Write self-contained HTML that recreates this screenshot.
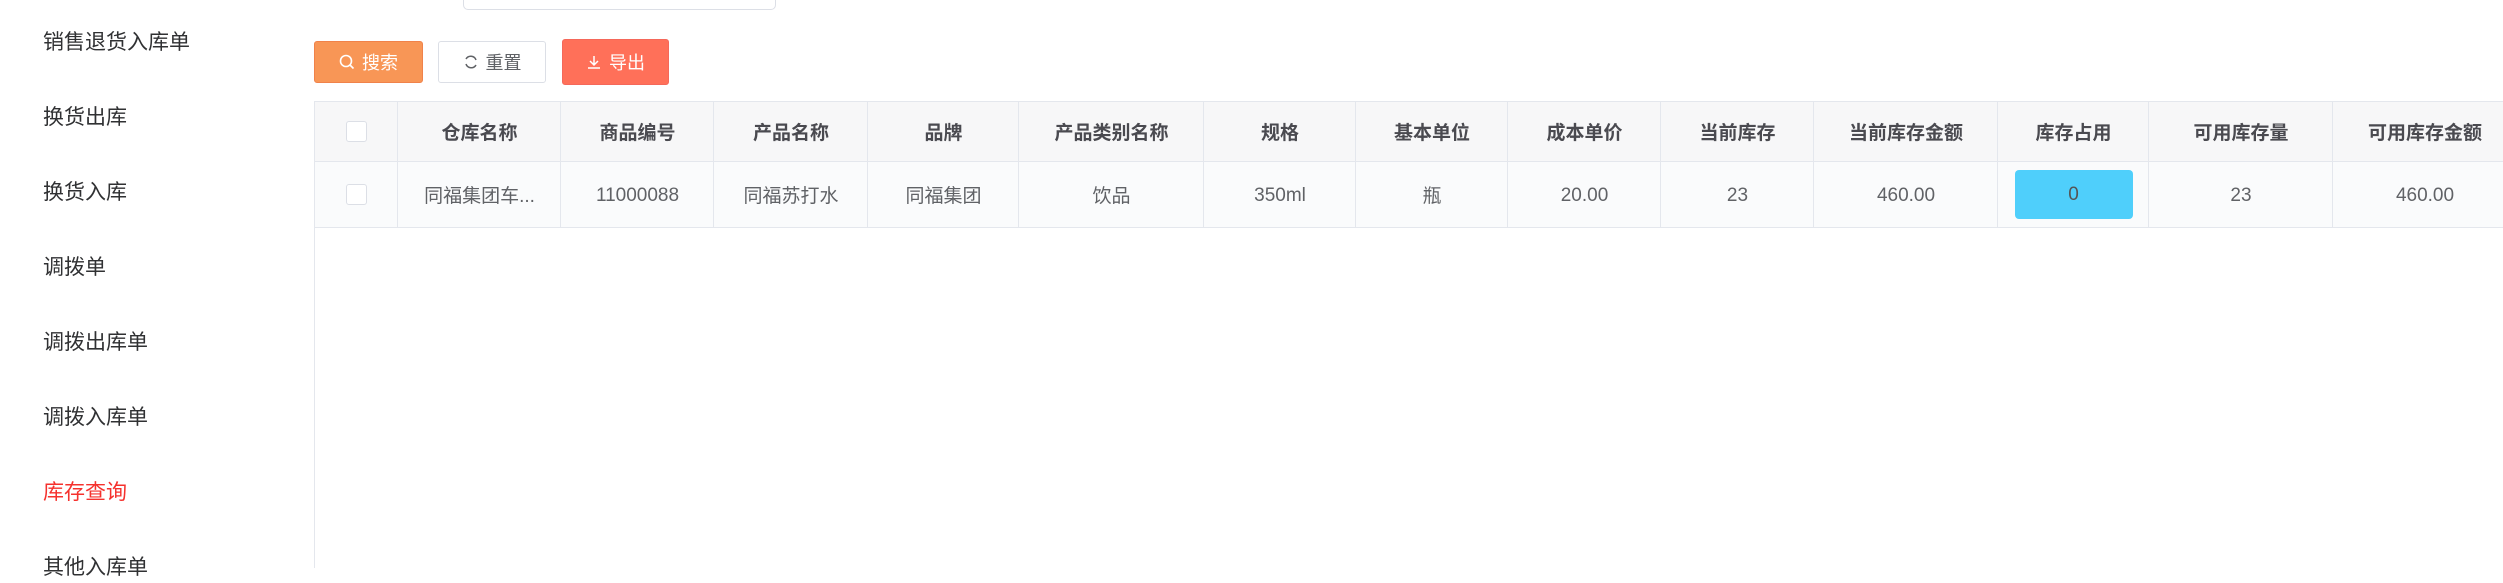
<!DOCTYPE html>
<html><head><meta charset="utf-8"><style>
*{margin:0;padding:0;box-sizing:border-box}
body{width:2503px;height:565px;background:#fff;font-family:"Liberation Sans","Noto Sans CJK SC",sans-serif;position:relative;overflow:hidden;color:#303133}
.menu{position:absolute;left:43px;font-size:21px;color:#303133;line-height:30px}
.inp{position:absolute;left:463px;top:-10px;width:313px;height:20px;border:1px solid #dcdfe6;border-radius:5px}
.btn{position:absolute;font-size:18px;display:flex;align-items:center;justify-content:center;border-radius:3px;gap:7px}
.hd{position:absolute;top:101px;height:61px;background:#f7f7f8;border:1px solid #e4e7ed;border-right:none;display:flex;align-items:center;justify-content:center;font-size:19px;font-weight:bold;color:#4a4a50;white-space:nowrap}
.cl{position:absolute;top:161px;height:67px;background:#fafbfc;border:1px solid #e4e7ed;border-right:none;display:flex;align-items:center;justify-content:center;font-size:19px;color:#606266;white-space:nowrap;overflow:hidden}
.n{padding-top:3px}
.cb{display:inline-block;width:21px;height:21px;border:1px solid #dcdfe6;border-radius:3px;background:#fff}
.vl{position:absolute;left:314px;top:228px;width:1px;height:340px;background:#e4e7ed}
</style></head><body>
<div class="menu" style="top:28px">销售退货入库单</div>
<div class="menu" style="top:103px">换货出库</div>
<div class="menu" style="top:178px">换货入库</div>
<div class="menu" style="top:253px">调拨单</div>
<div class="menu" style="top:328px">调拨出库单</div>
<div class="menu" style="top:403px">调拨入库单</div>
<div class="menu" style="top:478px;color:#f5312d">库存查询</div>
<div class="menu" style="top:553px">其他入库单</div>
<div class="inp"></div>
<div class="btn" style="left:314px;top:41px;width:109px;height:42px;background:#f89656;border:1px solid #f0824a;color:#fff">
<svg width="16" height="16" viewBox="0 0 16 16"><circle cx="7" cy="7" r="5.5" fill="none" stroke="#fff" stroke-width="1.6"/><path d="M11 11l3.5 3.5" stroke="#fff" stroke-width="1.6"/></svg>搜索</div>
<div class="btn" style="left:438px;top:41px;width:108px;height:42px;background:#fff;border:1px solid #dcdfe6;color:#606266">
<svg width="16" height="16" viewBox="0 0 16 16"><path d="M13 6A5.5 5.5 0 0 0 3 5M3 10a5.5 5.5 0 0 0 10 1" fill="none" stroke="#606266" stroke-width="1.5"/></svg>重置</div>
<div class="btn" style="left:562px;top:39px;width:107px;height:46px;background:#ff7059;border:1px solid #f5685a;color:#fff">
<svg width="16" height="16" viewBox="0 0 16 16"><path d="M8 2v9M4 7l4 4 4-4M2 14h12" fill="none" stroke="#fff" stroke-width="1.5"/></svg>导出</div>

<div class="hd" style="left:314px;width:84px"><span class="cb"></span></div>
<div class="hd" style="left:397px;width:164px">仓库名称</div>
<div class="hd" style="left:560px;width:154px">商品编号</div>
<div class="hd" style="left:713px;width:155px">产品名称</div>
<div class="hd" style="left:867px;width:152px">品牌</div>
<div class="hd" style="left:1018px;width:186px">产品类别名称</div>
<div class="hd" style="left:1203px;width:153px">规格</div>
<div class="hd" style="left:1355px;width:153px">基本单位</div>
<div class="hd" style="left:1507px;width:154px">成本单价</div>
<div class="hd" style="left:1660px;width:154px">当前库存</div>
<div class="hd" style="left:1813px;width:185px">当前库存金额</div>
<div class="hd" style="left:1997px;width:152px">库存占用</div>
<div class="hd" style="left:2148px;width:185px">可用库存量</div>
<div class="hd" style="left:2332px;width:185px">可用库存金额</div>

<div class="cl" style="left:314px;width:84px"><span class="cb"></span></div>
<div class="cl" style="left:397px;width:164px">同福集团车...</div>
<div class="cl n" style="left:560px;width:154px">11000088</div>
<div class="cl" style="left:713px;width:155px">同福苏打水</div>
<div class="cl" style="left:867px;width:152px">同福集团</div>
<div class="cl" style="left:1018px;width:186px">饮品</div>
<div class="cl n" style="left:1203px;width:153px">350ml</div>
<div class="cl" style="left:1355px;width:153px">瓶</div>
<div class="cl n" style="left:1507px;width:154px">20.00</div>
<div class="cl n" style="left:1660px;width:154px">23</div>
<div class="cl n" style="left:1813px;width:185px">460.00</div>
<div class="cl" style="left:1997px;width:152px"><div style="width:118px;height:49px;line-height:49px;text-align:center;background:#4fcffb;border-radius:4px;color:#555">0</div></div>
<div class="cl n" style="left:2148px;width:185px">23</div>
<div class="cl n" style="left:2332px;width:185px">460.00</div>
<div class="vl"></div>
</body></html>
